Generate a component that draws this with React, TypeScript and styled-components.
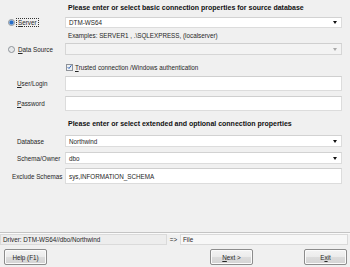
import React from "react";
import styled, { createGlobalStyle } from "styled-components";

const Global = createGlobalStyle`
  html, body { margin: 0; padding: 0; background: #f0f0f0; }
  * { box-sizing: border-box; }
`;

const Window = styled.div`
  width: 350px;
  height: 267px;
  background: #f0f0f0;
  display: flex;
  flex-direction: column;
  font-family: "Liberation Sans", Arial, sans-serif;
  font-size: 6.3px;
  color: #262626;
  overflow: hidden;
`;

const Form = styled.div`
  display: flex;
  flex-direction: column;
  padding: 3px 8px 0 0;
`;

const Row = styled.div<{ $mt: number; $h: number }>`
  display: grid;
  grid-template-columns: 65px 1fr;
  align-items: center;
  margin-top: ${(p) => p.$mt}px;
  height: ${(p) => p.$h}px;
`;

const Title = styled.div`
  grid-column: 2;
  padding-left: 3px;
  font-weight: bold;
  font-size: 7px;
  color: #111;
  white-space: nowrap;
`;

const Hint = styled.div`
  grid-column: 2;
  padding-left: 3px;
  white-space: nowrap;
`;

const Label = styled.div<{ $indent?: number }>`
  padding-left: ${(p) => p.$indent ?? 17}px;
  white-space: nowrap;
`;

const RadioLabel = styled.label`
  display: flex;
  align-items: center;
  padding-left: 8px;
  white-space: nowrap;
`;

const RadioDot = styled.span<{ $on?: boolean }>`
  width: 7px;
  height: 7px;
  border-radius: 50%;
  border: 1px solid #8a8f96;
  background: ${(p) =>
    p.$on
      ? "radial-gradient(circle, #2a6fc9 0 1.6px, #8fb8e6 2.2px, #e9eef4 2.6px)"
      : "radial-gradient(circle, #e6e8ea 0 1.5px, #f4f5f6 3px)"};
  margin-right: 2px;
  flex: none;
`;

const FocusText = styled.span<{ $focus?: boolean }>`
  padding: 0 1px;
  outline: ${(p) => (p.$focus ? "1px dotted #333" : "none")};
  outline-offset: 0;
`;

const Combo = styled.div<{ $disabled?: boolean }>`
  height: 100%;
  display: flex;
  align-items: center;
  justify-content: space-between;
  padding: 0 3px;
  background: ${(p) => (p.$disabled ? "#f3f3f3" : "#fff")};
  border: 1px solid ${(p) => (p.$disabled ? "#d6d6d6" : "#dcdcdc")};
  border-top-color: ${(p) => (p.$disabled ? "#cfcfcf" : "#d2d2d2")};
  white-space: nowrap;
`;

const Arrow = styled.span<{ $disabled?: boolean }>`
  width: 0;
  height: 0;
  border-left: 2.5px solid transparent;
  border-right: 2.5px solid transparent;
  border-top: 3px solid ${(p) => (p.$disabled ? "#a8a8a8" : "#111")};
  margin-right: 1px;
`;

const Input = styled.div`
  height: 100%;
  display: flex;
  align-items: center;
  padding: 0 3px;
  background: #fff;
  border: 1px solid #dcdcdc;
  border-top-color: #cfcfcf;
  white-space: nowrap;
`;

const CheckRow = styled.label`
  grid-column: 2;
  display: flex;
  align-items: center;
  padding-left: 1px;
  white-space: nowrap;
`;

const CheckBox = styled.span`
  width: 7px;
  height: 7px;
  border: 1px solid #8e9298;
  background: #eef1f4;
  margin-right: 2px;
  display: flex;
  align-items: center;
  justify-content: center;
  flex: none;
`;

const Spacer = styled.div`
  flex: 1;
`;

const Separator = styled.div`
  height: 2px;
  border-top: 1px solid #c4c4c4;
  border-bottom: 1px solid #fafafa;
`;

const StatusBar = styled.div`
  display: flex;
  align-items: center;
  height: 11px;
  padding-right: 2px;
`;

const StatusField = styled.div<{ $w?: number; $light?: boolean }>`
  ${(p) => (p.$w ? `width: ${p.$w}px; flex: none;` : "flex: 1;")}
  height: 100%;
  display: flex;
  align-items: center;
  padding: 0 2px;
  background: ${(p) => (p.$light ? "#f7f7f7" : "#ededed")};
  border: 1px solid #dadada;
  white-space: nowrap;
`;

const Arrowish = styled.span`
  width: 13px;
  text-align: center;
  flex: none;
`;

const ButtonBar = styled.div`
  display: flex;
  align-items: center;
  height: 16px;
  margin: 4px 3px 2px 4px;
`;

const Button = styled.div<{ $ml?: number }>`
  width: 43px;
  height: 16px;
  margin-left: ${(p) => p.$ml ?? 0}px;
  display: flex;
  align-items: center;
  justify-content: center;
  border: 1px solid #8c8c8c;
  border-radius: 2px;
  background: linear-gradient(#f4f4f4 0%, #ebebeb 50%, #dcdcdc 51%, #d4d4d4 100%);
  box-shadow: inset 0 0 0 1px #fbfbfb;
  white-space: nowrap;
`;

export default function App() {
  return (
    <Window>
      <Global />
      <Form>
        <Row $mt={0} $h={9}>
          <Title>Please enter or select basic connection properties for source database</Title>
        </Row>
        <Row $mt={5} $h={11}>
          <RadioLabel>
            <RadioDot $on />
            <FocusText $focus>
              <u>S</u>erver
            </FocusText>
          </RadioLabel>
          <Combo>
            <span>DTM-WS64</span>
            <Arrow />
          </Combo>
        </Row>
        <Row $mt={3} $h={8}>
          <Hint>Examples: SERVER1 , .\SQLEXPRESS, (localserver)</Hint>
        </Row>
        <Row $mt={4} $h={12}>
          <RadioLabel>
            <RadioDot />
            <FocusText>
              <u>D</u>ata Source
            </FocusText>
          </RadioLabel>
          <Combo $disabled>
            <span />
            <Arrow $disabled />
          </Combo>
        </Row>
        <Row $mt={7} $h={10}>
          <CheckRow>
            <CheckBox>
              <svg width="6" height="6" viewBox="0 0 6 6">
                <path d="M0.8 3.2 L2.4 4.8 L5.3 0.9" fill="none" stroke="#2b5fb4" strokeWidth="1.2" />
              </svg>
            </CheckBox>
            <span>
              <u>T</u>rusted connection /Windows authentication
            </span>
          </CheckRow>
        </Row>
        <Row $mt={4} $h={15}>
          <Label>
            <u>U</u>ser/Login
          </Label>
          <Input />
        </Row>
        <Row $mt={5} $h={15}>
          <Label>
            <u>P</u>assword
          </Label>
          <Input />
        </Row>
        <Row $mt={8} $h={9}>
          <Title>Please enter or select extended and optional connection properties</Title>
        </Row>
        <Row $mt={7} $h={12}>
          <Label>Database</Label>
          <Combo>
            <span>Northwind</span>
            <Arrow />
          </Combo>
        </Row>
        <Row $mt={5} $h={12}>
          <Label>Schema/Owner</Label>
          <Combo>
            <span>dbo</span>
            <Arrow />
          </Combo>
        </Row>
        <Row $mt={4} $h={16}>
          <Label $indent={12}>Exclude Schemas</Label>
          <Input>sys,INFORMATION_SCHEMA</Input>
        </Row>
      </Form>
      <Spacer />
      <Separator />
      <StatusBar>
        <StatusField $w={167}>Driver: DTM-WS64//dbo/Northwind</StatusField>
        <Arrowish>=&gt;</Arrowish>
        <StatusField $light>File</StatusField>
      </StatusBar>
      <ButtonBar>
        <Button>Help (F1)</Button>
        <Spacer />
        <Button>
          <span>
            <u>N</u>ext &gt;
          </span>
        </Button>
        <Button $ml={51}>
          <span>
            E<u>x</u>it
          </span>
        </Button>
      </ButtonBar>
    </Window>
  );
}
